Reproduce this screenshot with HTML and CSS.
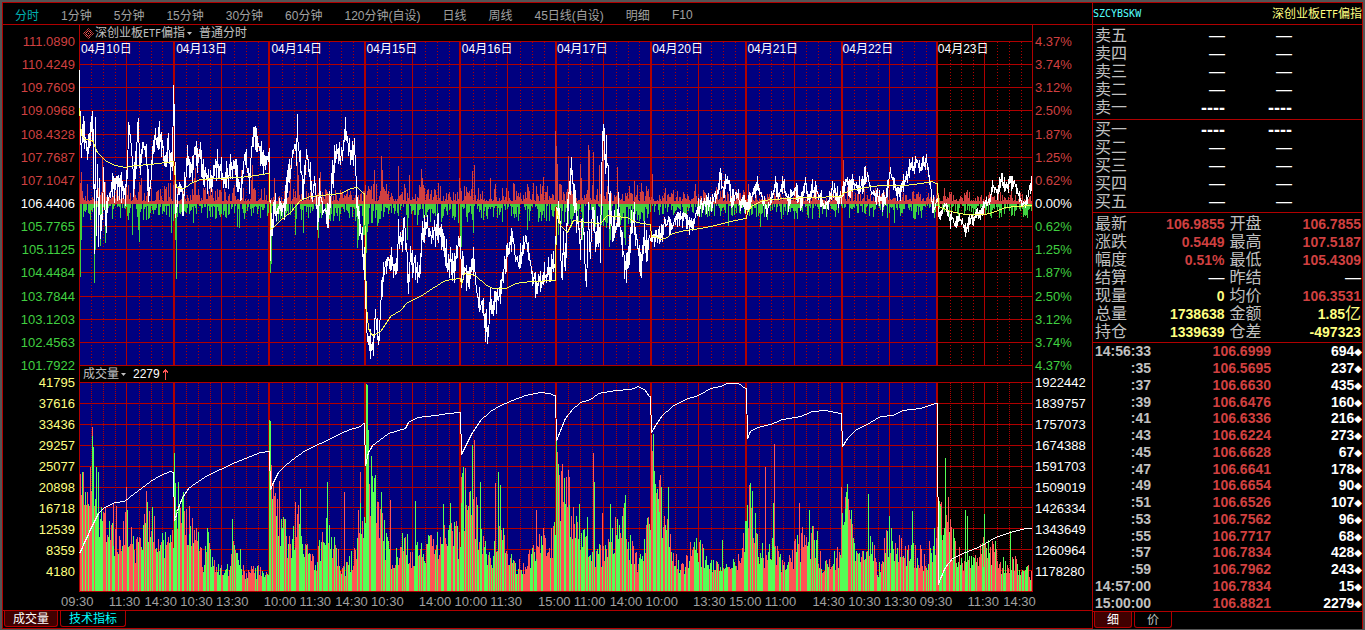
FILE: index.html
```html
<!DOCTYPE html>
<html lang="zh-CN">
<head>
  <meta charset="UTF-8">
  <meta name="viewport" content="width=device-width, initial-scale=1.0">
  <title>深创业板ETF偏指 分时</title>
  <link rel="stylesheet" href="styles.css">
</head>
<body>
  <main class="left">
    <nav class="periods">
      <button type="button" class="active">分时</button>
      <button type="button">1分钟</button>
      <button type="button">5分钟</button>
      <button type="button">15分钟</button>
      <button type="button">30分钟</button>
      <button type="button">60分钟</button>
      <button type="button">120分钟(自设)</button>
      <button type="button">日线</button>
      <button type="button">周线</button>
      <button type="button">45日线(自设)</button>
      <button type="button">明细</button>
      <button type="button">F10</button>
    </nav>

    <div class="charts">
      <div class="title price-title">
        <svg class="gem" viewBox="0 0 11 11" width="11" height="11">
          <path d="M5.5 0.5L10.5 5.5L5.5 10.5L0.5 5.5Z" fill="none" stroke="#ff5555" stroke-dasharray="1.4 0.6"/>
          <path d="M5.5 2.5L8.5 5.5L5.5 8.5L2.5 5.5Z" fill="none" stroke="#ff5555"/>
          <path d="M5 5h1v1h-1z" fill="#ff5555"/>
        </svg>
        <span>深创业板<span class="mono">ETF</span>偏指</span>
        <svg class="caret" viewBox="0 0 5 3" width="5" height="3"><path d="M0 0h5L2.5 3z" fill="#c0c0c0"/></svg>
        <span>普通分时</span>
      </div>

      <ul class="axis price-axis">
        <li class="up">111.0890</li><li class="up">110.4249</li><li class="up">109.7609</li>
        <li class="up">109.0968</li><li class="up">108.4328</li><li class="up">107.7687</li>
        <li class="up">107.1047</li><li>106.4406</li><li class="down">105.7765</li>
        <li class="down">105.1125</li><li class="down">104.4484</li><li class="down">103.7844</li>
        <li class="down">103.1203</li><li class="down">102.4563</li><li class="down">101.7922</li>
      </ul>

      <div class="plot price-plot">
        <svg id="price" viewBox="0 0 954 325" preserveAspectRatio="none"></svg>
        <div class="dates">
          <span>04月10日</span><span>04月13日</span><span>04月14日</span><span>04月15日</span><span>04月16日</span>
          <span>04月17日</span><span>04月20日</span><span>04月21日</span><span>04月22日</span><span>04月23日</span>
        </div>
      </div>

      <ul class="axis percent-axis">
        <li class="up">4.37%</li><li class="up">3.74%</li><li class="up">3.12%</li><li class="up">2.50%</li>
        <li class="up">1.87%</li><li class="up">1.25%</li><li class="up">0.62%</li><li>0.00%</li>
        <li class="down">0.62%</li><li class="down">1.25%</li><li class="down">1.87%</li><li class="down">2.50%</li>
        <li class="down">3.12%</li><li class="down">3.74%</li><li class="down">4.37%</li>
      </ul>

      <div class="title volume-title">
        <span>成交量</span>
        <svg class="caret" viewBox="0 0 5 3" width="5" height="3"><path d="M0 0h5L2.5 3z" fill="#c0c0c0"/></svg>
        <span class="now">2279</span>
        <svg viewBox="0 0 5 11" width="5" height="11"><path d="M2 0h1v11h-1zM1 1h3v1h-3zM0 2h5v2h-1v-1h-3v1h-1z" fill="#ff5555"/></svg>
      </div>

      <ul class="axis volume-axis">
        <li>41795</li><li>37616</li><li>33436</li><li>29257</li><li>25077</li>
        <li>20898</li><li>16718</li><li>12539</li><li>8359</li><li>4180</li>
      </ul>

      <div class="plot volume-plot">
        <svg id="volume" viewBox="0 0 954 210" preserveAspectRatio="none"></svg>
      </div>

      <ul class="axis oi-axis">
        <li>1922442</li><li>1839757</li><li>1757073</li><li>1674388</li><li>1591703</li>
        <li>1509019</li><li>1426334</li><li>1343649</li><li>1260964</li><li>1178280</li>
      </ul>

      <div class="times">
        <span class="long">09:30</span><span>11:30</span><span>14:30</span><span>10:30</span><span class="long">13:30</span>
        <span>10:00</span><span>11:30</span><span>14:30</span><span class="long">10:30</span><span>14:00</span>
        <span>10:00</span><span class="long">11:30</span><span>15:00</span><span>11:00</span><span>14:00</span>
        <span class="long">10:00</span><span>13:30</span><span>15:00</span><span class="long">11:00</span><span>14:30</span>
        <span>10:30</span><span>13:30</span><span class="long">09:30</span><span>11:30</span><span class="last">14:30</span>
      </div>
    </div>

    <footer class="tabs">
      <button type="button" class="active">成交量</button>
      <button type="button" class="tech">技术指标</button>
    </footer>
  </main>

  <aside class="quote">
    <header class="symbol">
      <span class="code mono">SZCYBSKW</span>
      <span class="name">深创业板<span class="mono">ETF</span>偏指</span>
    </header>

    <table class="book">
      <tr><th>卖五</th><td>—</td><td>—</td><td></td></tr>
      <tr><th>卖四</th><td>—</td><td>—</td><td></td></tr>
      <tr><th>卖三</th><td>—</td><td>—</td><td></td></tr>
      <tr><th>卖二</th><td>—</td><td>—</td><td></td></tr>
      <tr class="best"><th>卖一</th><td>----</td><td>----</td><td></td></tr>
    </table>
    <table class="book bids">
      <tr class="best"><th>买一</th><td>----</td><td>----</td><td></td></tr>
      <tr><th>买二</th><td>—</td><td>—</td><td></td></tr>
      <tr><th>买三</th><td>—</td><td>—</td><td></td></tr>
      <tr><th>买四</th><td>—</td><td>—</td><td></td></tr>
      <tr><th>买五</th><td>—</td><td>—</td><td></td></tr>
    </table>

    <table class="stats">
      <tr><th>最新</th><td class="up">106.9855</td><th>开盘</th><td class="up">106.7855</td></tr>
      <tr><th>涨跌</th><td class="up">0.5449</td><th>最高</th><td class="up">107.5187</td></tr>
      <tr><th>幅度</th><td class="up">0.51%</td><th>最低</th><td class="up">105.4309</td></tr>
      <tr><th>结算</th><td class="none">—</td><th>昨结</th><td class="none">—</td></tr>
      <tr><th>现量</th><td>0</td><th>均价</th><td class="up">106.3531</td></tr>
      <tr><th>总量</th><td>1738638</td><th>金额</th><td>1.85<span class="unit">亿</span></td></tr>
      <tr><th>持仓</th><td>1339639</td><th>仓差</th><td>-497323</td></tr>
    </table>

    <div class="ticks-wrap">
      <table class="ticks">
        <tr><td>14:56:33</td><td>106.6999</td><td>694<i>◆</i></td></tr>
        <tr><td>:35</td><td>106.5695</td><td>237<i>◆</i></td></tr>
        <tr><td>:37</td><td>106.6630</td><td>435<i>◆</i></td></tr>
        <tr><td>:39</td><td>106.6476</td><td>160<i>◆</i></td></tr>
        <tr><td>:41</td><td>106.6336</td><td>216<i>◆</i></td></tr>
        <tr><td>:43</td><td>106.6224</td><td>273<i>◆</i></td></tr>
        <tr><td>:45</td><td>106.6628</td><td>67<i>◆</i></td></tr>
        <tr><td>:47</td><td>106.6641</td><td>178<i>◆</i></td></tr>
        <tr><td>:49</td><td>106.6654</td><td>90<i>◆</i></td></tr>
        <tr><td>:51</td><td>106.6526</td><td>107<i>◆</i></td></tr>
        <tr><td>:53</td><td>106.7562</td><td>96<i>◆</i></td></tr>
        <tr><td>:55</td><td>106.7717</td><td>68<i>◆</i></td></tr>
        <tr><td>:57</td><td>106.7834</td><td>428<i>◆</i></td></tr>
        <tr><td>:59</td><td>106.7962</td><td>243<i>◆</i></td></tr>
        <tr><td>14:57:00</td><td>106.7834</td><td>15<i>◆</i></td></tr>
        <tr><td>15:00:00</td><td>106.8821</td><td>2279<i>◆</i></td></tr>
      </table>
    </div>

    <footer class="tabs">
      <button type="button" class="active">细</button>
      <button type="button">价</button>
    </footer>
  </aside>

  <script src="charts.js"></script>
</body>
</html>
```

FILE: styles.css
```css
* { box-sizing: border-box; }
body {
  margin: 0;
  height: 100vh;
  display: flex;
  background: #000;
  border: solid #555;
  border-width: 2px 2px 1px 2px;
  color: #c0c0c0;
  font-family: "Liberation Sans", "Noto Sans CJK SC", sans-serif;
  font-size: 12px;
  overflow: hidden;
}
button { background: none; border: 0; margin: 0; padding: 0; font: inherit; color: inherit; cursor: pointer; }
ul { list-style: none; margin: 0; padding: 0; }
svg { display: block; }
.mono { font-family: "DejaVu Sans Mono", monospace; font-size: 10px; }
.up { color: #d04040; }
.down { color: #40d040; }

/* left side: period bar, charts, tabs */
.left { flex: 1; min-width: 0; display: flex; flex-direction: column; border: 1px solid #b00000; border-right: 0; }
.periods { display: flex; gap: 22px; height: 22px; padding: 2px 0 0 12px; border-bottom: 1px solid #b00000; color: #a0a0a0; white-space: nowrap; overflow: hidden; }
.periods .active { color: #00b0b0; }

.charts {
  flex: 1;
  min-height: 0;
  display: grid;
  grid-template-columns: 76px 1fr 59px;
  grid-template-rows: 16px 325fr 16px 210fr 18px;
}
.title { grid-column: 2; display: flex; align-items: center; border: solid #b00000; border-width: 0 1px; padding-left: 3px; white-space: nowrap; line-height: 16px; }
.caret { margin: 0 7px 0 2px; }
.gem { margin-right: 1px; }
.price-title { grid-row: 1; }
.volume-title { grid-row: 3; }
.now { color: #fff; margin-right: 3px; }

.plot { grid-column: 2; display: grid; min-height: 0; min-width: 0; position: relative; }
.plot svg { position: absolute; width: 100%; height: 100%; shape-rendering: crispEdges; }
.plot path { fill: none; stroke-width: 1px; vector-effect: non-scaling-stroke; }
.price-plot { grid-row: 2; }
.volume-plot { grid-row: 4; }
.past { fill: #000080; }
.plot .grid { stroke: #b00000; }
.plot .day { stroke: #b00000; stroke-width: 2px; }
.plot .half { stroke: #b00000; stroke-dasharray: 1 2; }
.volume-plot .half { stroke-dasharray: 1 1; }
.plot .rise { stroke: #d04040; }
.plot .fall { stroke: #40d040; }
.plot .buy { stroke: #ff5555; }
.plot .sell { stroke: #55ff55; }
.plot .line { stroke: #fff; }
.plot .avg { stroke: #ffff55; }
.dates { position: relative; display: grid; grid-template-columns: repeat(10, 1fr); color: #fff; padding-left: 2px; line-height: 16px; white-space: nowrap; height: 16px; }

/* labels are centred on their grid lines */
.axis { display: flex; flex-direction: column; justify-content: space-between; font-size: 13px; color: #fff; min-height: 0; }
.axis li { height: 1px; line-height: 1px; }
.price-axis, .volume-axis { grid-column: 1; text-align: right; padding-right: 4px; }
.percent-axis, .oi-axis { grid-column: 3; padding-left: 2px; }
.price-axis, .percent-axis { grid-row: 2; }
.volume-axis, .oi-axis { grid-row: 4; }
.volume-axis li, .oi-axis li { flex: 1; }
.volume-axis { color: #ffff80; }

.times { grid-row: 5; grid-column: 1 / 4; display: flex; margin: 0 59px 0 58px; padding-right: 18px; line-height: 20px; font-size: 13px; color: #a0a0a0; }
.times span { flex: 3 0 0; min-width: 0; white-space: nowrap; }
.times .long { flex-grow: 4; }
.times .last { flex-grow: 1; }

.tabs { display: flex; gap: 2px; height: 18px; padding: 0 1px 1px; border-top: 1px solid #b00000; }
.tabs button { border: 1px solid #b00000; border-top: 0; border-radius: 0 0 3px 3px; padding: 0 8px; line-height: 14px; }
.tabs .active { background: #400000; color: #fff; }
.tabs .tech { color: #00ffff; }

/* right side: quote panel */
.quote { flex: 0 0 271px; display: flex; flex-direction: column; border: 1px solid #b00000; border-bottom: 0; }
.symbol { display: flex; justify-content: space-between; align-items: center; height: 22px; padding-top: 1px; border-bottom: 1px solid #b00000; line-height: 20px; }
.code { color: #55ffff; }
.name { color: #ffff80; }

table { width: 100%; border-collapse: collapse; table-layout: fixed; }
th, td { padding: 0; height: 18px; line-height: 18px; white-space: nowrap; }
th { font-weight: normal; font-size: 16px; text-align: left; padding-left: 2px; }
td { font-weight: bold; font-size: 14px; text-align: right; }

.book, .stats { border-collapse: separate; border-spacing: 0; border-bottom: 1px solid #b00000; padding: 2px 0; }
.bids { padding: 1px 0; }
.book th { width: 65px; }
.book td { width: 67px; color: #fff; font-weight: normal; font-size: 16px; }
.book .best td { font-weight: bold; font-size: 18px; }
.book td:last-child { width: auto; }

.stats { padding-bottom: 1px; }
.stats th { width: 40px; }
.stats td { color: #ffff80; padding-right: 3px; }
.stats td:last-child { padding-right: 1px; }
.stats .up { color: #d04040; }
.stats .none { color: #fff; font-weight: normal; font-size: 16px; }
.stats .unit { font-size: 16px; line-height: 16px; font-weight: normal; }

.ticks-wrap { flex: 1; min-height: 0; }
.ticks { height: 100%; }
.ticks td { height: auto; line-height: 16px; width: 120px; color: #d04040; }
.ticks td:first-child { width: 58px; color: #c0c0c0; }
.ticks td:last-child { width: auto; color: #fff; }
.ticks i { font: 10px/10px "DejaVu Sans", sans-serif; vertical-align: 1px; }

.quote .tabs button { padding: 0 12px; }
```

FILE: charts.js
```js
// Chart data is kept as "x,y x,y ..." pairs, one string per trading day.
// X0 is the left edge of both plots, PY / VY are their top edges.
const X0 = 79, PY = 41, VY = 382, W = 954;
const DAY = 95.4, ZERO = 203, BASE = 590;

const price = [
  '79,83 80,140 81,150 82,130 84,130 86,150 87,160 89,140 91,125 93,135 94,240 95,140 96,236 97,170 98,230 99,180 100,238 102,205 103,170 105,218 107,200 109,195 112,190 115,180 118,184 122,182 125,190 127,170 128,122 129,135 131,150 133,178 136,160 137,125 138,115 139,160 142,148 145,146 147,170 149,192 152,160 155,138 158,136 161,145 163,148 165,168 168,140 170,165 172,160 173,108',
  '174,106 175,215 177,195 180,190 183,200 185,175 188,155 190,175 192,170 195,148 197,160 200,155 203,170 206,175 210,185 214,170 217,162 219,170 222,175 225,180 228,175 231,168 234,160 238,180 240,195 243,160 246,158 249,180 251,150 252,137 254,135 257,145 260,150 264,158 267,160 268,150',
  '269,155 270,245 271,225 272,232 274,210 280,208 284,205 287,180 290,170 293,150 296,155 297,130 299,160 303,190 306,150 309,178 312,190 315,185 317,222 319,195 322,205 326,212 330,205 332,175 336,152 340,158 345,135 348,145 351,155 354,145 356,190 357,203 359,220 361,235 363,258',
  '364,260 365,300 367,335 369,348 371,352 373,340 375,312 377,335 379,332 381,285 383,275 386,265 390,260 394,272 397,270 398,230 401,245 404,225 406,245 408,287 410,250 413,262 416,265 419,278 421,240 424,230 427,224 430,235 433,232 438,225 441,230 443,238 447,262 450,260 453,268 457,250 459,235',
  '460,290 462,264 466,278 470,270 473,255 475,275 478,305 482,300 485,322 488,334 490,304 495,300 500,288 503,272 506,262 508,245 511,236 514,252 518,265 522,250 525,236 528,256 532,276 536,288 540,284 545,275 550,270 554,262',
  '555,168 556,212 558,205 559,215 561,268 563,250 566,255 567,210 569,180 571,165 573,185 575,205 578,230 580,248 582,222 584,250 586,282 588,215 590,255 592,215 596,243 598,225 600,240 601,180 602,142 604,140 605,170 606,155 608,185 609,205 612,228 616,232 618,215 621,235 624,270 628,250 632,222 634,215 637,250 641,258 644,240 649,242',
  '650,262 651,238 655,238 660,236 664,222 668,220 672,226 676,218 680,218 685,215 688,222 692,226 696,214 700,206 705,200 710,204 715,195 718,192 720,176 723,190 727,180 731,198 736,192 741,204 744,205',
  '746,226 747,205 752,198 757,185 759,195 763,200 767,208 771,200 775,184 779,195 783,184 788,200 795,190 800,203 805,182 808,198 812,186 815,190 819,198 823,206 828,204 832,188 836,196 840,198',
  '841,240 842,195 846,180 850,190 855,182 860,187 867,174 870,190 878,196 885,200 890,170 895,188 900,192 905,178 910,167 915,162 920,166 925,162 926,160 928,175 930,185 932,206 935,202',
  '936,207 940,214 944,205 950,218 955,222 960,216 965,232 970,220 975,215 980,212 985,204 990,196 993,184 997,195 1001,176 1005,188 1010,178 1014,184 1020,202 1026,202 1029,190 1031,184'
];
// half height of the range covered inside one pixel column
const priceNoise = [16, 14, 14, 15, 14, 18, 9, 9, 9, 8];

const average = [
  '79,108 81,135 85,139 92,140 97,152 105,160 115,165 125,167 135,165 150,164 173,161',
  '174,170 176,187 184,188 190,183 200,179 215,178 240,177 255,175 268,173',
  '270,229 273,227 280,220 290,212 300,200 310,196 330,194 340,193 350,188 357,187 363,193',
  '364,205 366,305 368,328 372,335 380,331 390,316 400,310 407,302 420,296 432,288 445,280 459,278',
  '460,287 464,273 475,275 485,284 492,288 505,288 515,283 530,281 554,280',
  '555,205 560,225 567,232 573,220 587,222 600,223 607,215 615,216 626,217 637,222 649,224',
  '650,236 655,236 660,239 665,238 672,233 685,230 700,228 715,225 730,221 745,218',
  '746,213 752,205 762,200 785,198 810,197 840,196',
  '842,193 850,190 865,187 880,185 905,185 920,183 932,181 935,183',
  '936,205 950,211 965,214 985,214 995,211 1005,207 1015,206 1031,205'
];

// up / down strength bars round the zero line
const riseBase = [20, 14, 13, 18, 18, 18, 14, 10, 14, 10];
const fallBase = [16, 13, 16, 18, 16, 22, 11, 14, 13, 12];
const riseSpikes = '81,172 102,157 103,170 126,180 139,182 141,178 151,188 174,180 184,195 195,168 194,178 220,190 234,185 241,170 252,165 251,180 274,178 290,165 297,162 298,175 320,172 335,190 374,170 373,184 381,156 382,170 398,166 409,175 421,169 422,178 459,178 472,171 474,165 490,178 543,177 555,131 556,146 557,164 568,156 580,164 581,178 588,145 589,150 593,152 599,165 602,134 603,150 617,167 629,186 634,181 652,174 665,188 695,184 748,184 843,160 889,190 944,188 967,190 1011,188';
const fallSpikes = '80,277 81,240 94,283 95,250 105,243 100,246 132,235 139,242 138,230 171,233 176,279 175,240 193,223 237,227 239,228 270,273 271,264 295,235 303,233 318,238 357,248 358,240 363,235 364,235 365,235 366,253 367,232 368,224 377,226 407,240 417,225 460,247 461,247 473,233 527,230 558,235 582,240 583,232 609,247 610,240 625,245 624,238 728,226 760,227 894,223 934,218';

const volume = [
  '79,480 85,505 92,465 98,505 103,525 110,535 120,548 126,525 135,548 148,510 155,538 165,545 173,525',
  '174,480 180,505 190,520 195,538 203,560 207,540 215,568 228,570 235,545 245,572 268,568',
  '269,430 271,475 275,515 282,525 290,550 300,520 307,550 315,562 325,530 335,552 345,570 355,552 360,510 363,530',
  '364,480 369,480 375,500 380,525 388,550 395,560 405,540 412,555 425,548 440,545 450,535 459,540',
  '460,490 466,500 472,485 476,520 482,545 492,555 498,520 505,550 518,566 527,565 535,542 554,535',
  '555,460 558,500 562,485 568,495 574,530 582,542 587,535 595,555 602,552 610,542 623,520 630,545 637,560 649,530',
  '650,480 655,490 660,495 665,520 672,552 683,570 690,548 697,545 710,565 720,560 730,570 740,555 745,530',
  '746,500 750,495 754,520 758,545 765,560 772,550 785,565 795,550 805,535 817,545 822,568 832,562 840,550',
  '841,500 847,510 855,540 862,560 868,535 878,568 888,535 895,542 905,555 915,552 925,560 935,540',
  '936,510 945,510 949,530 955,550 965,565 975,560 985,548 993,548 1000,562 1010,560 1020,568 1031,572'
];
const buySpikes = '80,474 113,503 116,506 126,487 189,506 174,478 195,540 270,463 271,465 279,481 295,502 344,492 360,472 390,500 461,477 474,440 495,483 465,468 498,476 536,510 557,452 568,470 569,477 593,453 562,464 602,513 651,435 659,480 749,485 765,467 774,444 799,503 841,487 845,497 847,495 868,522 941,502 948,497 983,537 1031,571';
const sellSpikes = '82,472 92,436 93,463 96,467 98,472 147,502 174,474 175,483 178,482 208,532 232,519 269,420 300,489 327,482 366,384 367,385 368,430 381,492 415,501 443,504 450,503 472,445 480,482 498,472 500,485 556,440 558,464 564,478 579,504 594,482 610,504 625,495 624,503 653,434 668,487 722,540 750,483 752,491 773,503 809,510 847,484 868,494 889,516 912,511 945,458 940,506 965,510 984,514 967,516 1010,531';

const openInterest = [
  '79,553 85,540 92,525 98,513 103,508 114,502 124,501 130,496 138,490 150,481 160,475 170,471 173,472',
  '174,520 175,518 178,507 182,497 188,488 195,483 207,475 220,469 235,462 250,456 260,452 268,451',
  '269,492 272,484 278,472 285,465 295,457 305,450 320,443 330,438 340,433 350,429 360,426 363,423',
  '364,469 368,452 372,445 380,439 388,433 405,428 408,422 417,417 435,415 447,413 459,412',
  '460,456 465,446 472,432 480,420 490,411 500,405 512,400 525,395 540,392 550,393 554,395',
  '555,443 560,430 565,418 572,409 580,402 590,399 598,393 615,390 630,389 638,386 645,390 649,396',
  '650,434 655,425 662,415 672,406 685,399 698,395 710,388 720,386 726,383 738,383 745,388',
  '746,440 750,431 757,427 770,424 782,419 800,416 812,411 825,410 840,413',
  '841,448 847,438 855,430 870,422 880,416 892,415 902,410 920,408 935,403',
  '936,589 940,578 945,567 952,558 965,552 975,548 985,543 995,537 1010,532 1025,528 1031,528'
];

let seed = 20200423;
function rand() {
  seed = (seed * 1664525 + 1013904223) % 4294967296;
  return seed / 4294967296;
}

function points(str) {
  return str.split(' ').map(p => p.split(',').map(Number));
}

function valueAt(pts, x) {
  if (x <= pts[0][0]) return pts[0][1];
  for (let i = 1; i < pts.length; i++) {
    if (x <= pts[i][0]) {
      const [x1, y1] = pts[i - 1], [x2, y2] = pts[i];
      return y1 + (y2 - y1) * (x - x1) / (x2 - x1);
    }
  }
  return pts[pts.length - 1][1];
}

function dayOf(x) {
  return Math.min(9, Math.floor((x - X0 + 0.5) / DAY));
}

function path(svg, cls, d) {
  const el = document.createElementNS('http://www.w3.org/2000/svg', 'path');
  el.setAttribute('class', cls);
  el.setAttribute('d', d);
  svg.appendChild(el);
}

function drawGrid(svg, height, rows) {
  const bg = document.createElementNS('http://www.w3.org/2000/svg', 'rect');
  bg.setAttribute('class', 'past');
  bg.setAttribute('width', 857);
  bg.setAttribute('height', height - 1);
  svg.appendChild(bg);

  let grid = `M0.5 0V${height}M${W - 0.5} 0V${height}`, day = '', half = '';
  for (let i = 0; i <= rows; i++) {
    grid += `M0 ${Math.round(i * (height - 1) / rows) + 0.5}H${W}`;
  }
  for (let i = 1; i < 80; i++) {
    const x = Math.round(i * DAY / 8);
    if (i % 8 === 0) day += `M${Math.floor(i * DAY / 8)} 0V${height}`;
    else if (i % 4 === 0) grid += `M${x - 0.5} 0V${height}`;
    else half += `M${x + 0.5} 1V${height}`;
  }
  path(svg, 'half', half);
  path(svg, 'grid', grid);
  path(svg, 'day', day);
}

// one line through all days; with noise each pixel column gets a high and a low
function series(days, top, noise) {
  const sets = days.map(points);
  let d = '';
  for (let x = X0; x < X0 + W - 1; x++) {
    const k = dayOf(x);
    const y = valueAt(sets[k], x);
    const px = x - X0 + 0.5;
    if (noise) {
      const mid = y + (rand() - 0.5) * noise[k];
      const reach = noise[k] * Math.pow(rand(), 1.5);
      d += `${d ? 'L' : 'M'}${px} ${Math.round(mid - reach) - top}V${Math.round(mid + reach) - top + 1}`;
    } else {
      d += `${d ? 'L' : 'M'}${px} ${Math.round(y) - top + 0.5}`;
    }
  }
  return d;
}

function bars(str, from, top) {
  return points(str).map(([x, y]) => `M${x - X0 + 0.5} ${from - top}V${y - top}`).join('');
}

function drawPrice() {
  const svg = document.getElementById('price');
  drawGrid(svg, 325, 14);
  let rise = '', fall = '';
  for (let x = X0 + 1; x < X0 + W - 1; x++) {
    const k = dayOf(x);
    rise += `M${x - X0 + 0.5} ${ZERO + 1 - PY}v${-Math.round(3 + riseBase[k] * Math.pow(rand(), 2.2))}`;
    if (rand() > 0.2) fall += `M${x - X0 + 0.5} ${ZERO + 1 - PY}v${Math.round(2 + fallBase[k] * Math.pow(rand(), 1.7))}`;
  }
  path(svg, 'rise', rise + bars(riseSpikes, ZERO, PY));
  path(svg, 'fall', fall + bars(fallSpikes, ZERO + 1, PY));
  path(svg, 'line', series(price, PY, priceNoise));
  path(svg, 'avg', series(average, PY));
}

function drawVolume() {
  const svg = document.getElementById('volume');
  drawGrid(svg, 210, 10);
  const sets = volume.map(points);
  let buy = '', sell = '', up = true;
  for (let x = X0 + 1; x < X0 + W - 1; x++) {
    const h = (BASE - valueAt(sets[dayOf(x)], x)) * (0.6 + rand() * 0.75);
    if (rand() < 0.5) up = !up;
    const bar = `M${x - X0 + 0.5} ${BASE + 1 - VY}v${-Math.round(h)}`;
    if (up) buy += bar;
    else sell += bar;
  }
  path(svg, 'buy', buy + bars(buySpikes, BASE + 1, VY));
  path(svg, 'sell', sell + bars(sellSpikes, BASE + 1, VY));
  path(svg, 'line', series(openInterest, VY));
}

drawPrice();
drawVolume();
```
